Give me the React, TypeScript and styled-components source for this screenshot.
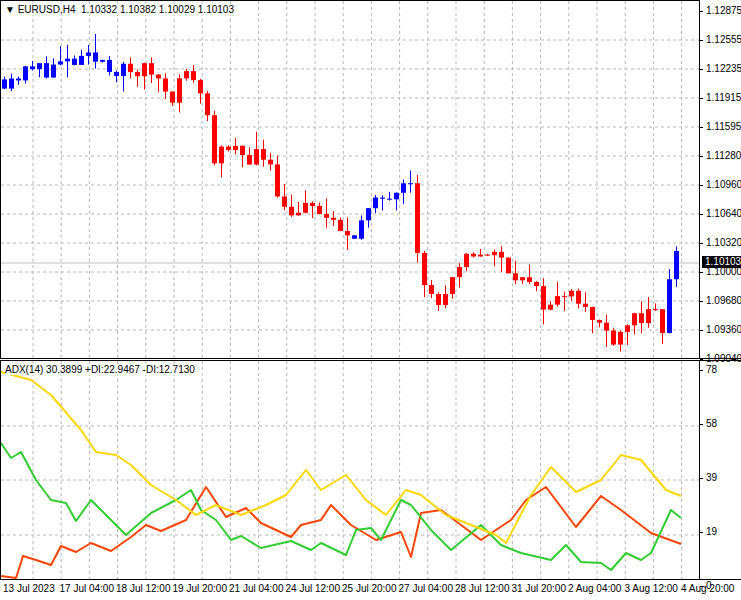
import styled, { createGlobalStyle } from "styled-components";

const Global = createGlobalStyle`
  body { margin: 0; background: #fff; font-family: "Liberation Sans", Arial, sans-serif; overflow: hidden; }
`;

const W = 700;
const MAIN_H = 358;
const IND_H = 218;

const Frame = styled.div`
  width: 741px;
  height: 600px;
  overflow: hidden;
  display: grid;
  grid-template-columns: ${W}px 41px;
  grid-template-rows: ${MAIN_H}px 3px ${IND_H}px 21px;
  font-size: 10px;
  color: #000;
`;

const Pane = styled.div<{ $top?: boolean }>`
  position: relative;
  border-left: 1px solid #000;
  border-top: ${(p) => (p.$top ? "1px solid #000" : "none")};
  border-right: 1px solid #000;
  overflow: hidden;
`;

const Separator = styled.div`
  grid-column: 1 / 3;
  border-top: 1px solid #000;
  border-bottom: 1px solid #000;
  background: #fff;
`;

const Legend = styled.div`
  position: absolute;
  left: 4px;
  top: 3px;
  font-size: 10px;
  background: #fff;
  white-space: pre;
`;

const Axis = styled.div<{ $first: number; $step: number }>`
  display: flex;
  flex-direction: column;
  position: relative;
  z-index: 1;
  span {
    flex: none;
    height: ${(p) => p.$step}px;
    line-height: 12px;
    padding-left: 6px;
    position: relative;
    &::before {
      content: "";
      position: absolute;
      left: 0;
      top: 6px;
      width: 3px;
      border-top: 1px solid #000;
    }
  }
  span:first-child {
    margin-top: ${(p) => p.$first - 6}px;
  }
  span:last-child {
    height: 12px;
  }
`;

const PriceTag = styled.div`
  position: absolute;
  left: 2px;
  top: 256px;
  background: #000;
  color: #fff;
  padding: 0 3px;
  line-height: 12px;
`;

const TimeAxis = styled.div`
  grid-column: 1 / 3;
  display: flex;
  overflow: hidden;
  padding-left: 3px;
  border-top: 1px solid #000;
  span {
    width: 56.5px;
    flex: none;
    line-height: 18px;
    white-space: nowrap;
    font-size: 10px;
  }
`;

// seeded random
let seed = 11;
const rnd = () => {
  seed = (seed * 16807) % 2147483647;
  return seed / 2147483647;
};

const keys: [number, number][] = [
  [0, 1.1212], [40, 1.1224], [100, 1.1234], [125, 1.1218], [150, 1.1222], [170, 1.1196],
  [190, 1.1222], [205, 1.1180], [212, 1.1128], [240, 1.1130], [270, 1.1125], [280, 1.1070],
  [320, 1.1066], [338, 1.1040], [355, 1.1048], [380, 1.1080], [400, 1.1100], [407, 1.1128],
  [413, 1.1062], [420, 1.0985], [440, 1.0962], [455, 1.0992], [470, 1.1022], [490, 1.1020],
  [510, 1.1004], [530, 1.0980], [550, 1.0960], [570, 1.0988], [590, 1.0946], [612, 1.0930],
  [632, 1.0950], [655, 1.0948], [662, 1.0936], [668, 1.0986], [673, 1.1032], [680, 1.1010],
];
const interp = (x: number) => {
  for (let i = 1; i < keys.length; i++) {
    if (x <= keys[i][0]) {
      const [x0, y0] = keys[i - 1];
      const [x1, y1] = keys[i];
      return y0 + ((x - x0) / (x1 - x0)) * (y1 - y0);
    }
  }
  return keys[keys.length - 1][1];
};
const py = (p: number) => 10 + ((1.12875 - p) / 0.0032) * 29;
const colorAt = (x: number) =>
  x < 125 ? "#0000ff" : x < 350 ? "#ff0000" : x < 412 ? "#0000ff" : x < 664 ? "#ff0000" : "#0000ff";

const candles: { x: number; o: number; c: number; h: number; l: number; col: string }[] = [];
let prev = interp(0);
for (let x = 3; x <= 680; x += 7) {
  const c = interp(x) + (rnd() - 0.5) * 0.0022;
  const o = prev;
  const h = Math.max(o, c) + rnd() * rnd() * 0.0022;
  const l = Math.min(o, c) - rnd() * rnd() * 0.0022;
  candles.push({ x, o, c, h, l, col: colorAt(x) });
  prev = c;
}

const yellow: [number, number][] = [[0,372],[30,380],[50,395],[80,430],[95,452],[115,455],[130,465],[150,485],[175,500],[195,515],[215,505],[240,515],[265,505],[285,495],[305,470],[320,490],[345,475],[365,500],[385,515],[405,490],[420,495],[445,515],[470,525],[495,535],[505,543],[530,495],[550,467],[575,492],[600,480],[620,455],[640,460],[665,490],[680,496]];
const green: [number, number][] = [[0,443],[10,458],[20,452],[35,480],[50,500],[65,503],[75,521],[90,500],[110,520],[125,535],[150,513],[175,500],[190,490],[200,510],[215,520],[230,540],[240,536],[260,548],[290,541],[310,550],[320,543],[345,555],[355,530],[370,528],[380,540],[400,500],[410,505],[430,530],[450,550],[480,525],[500,545],[520,553],[550,560],[565,545],[580,562],[600,563],[610,570],[625,553],[640,560],[650,553],[670,510],[680,518]];
const red: [number, number][] = [[0,576],[15,578],[22,556],[35,560],[50,565],[60,546],[75,552],[90,543],[110,551],[130,537],[145,525],[160,531],[185,520],[205,487],[225,517],[245,508],[260,523],[290,537],[300,525],[320,520],[330,505],[350,525],[375,540],[400,532],[410,557],[420,513],[440,510],[460,525],[480,540],[510,520],[525,500],[545,487],[575,527],[600,496],[620,510],[650,533],[680,544]];

const IND_TOP = 361;
const pts = (a: [number, number][]) => a.map(([x, y]) => `${x},${y - IND_TOP}`).join(" ");

const vGrid = Array.from({ length: 25 }, (_, i) => 32 + i * 28.2);

function Grid({ rows }: { rows: number[] }) {
  return (
    <g stroke="#b8b8b8" strokeDasharray="3 3" strokeWidth={1}>
      {vGrid.map((x) => (
        <line key={x} x1={x} y1={0} x2={x} y2={400} />
      ))}
      {rows.map((y) => (
        <line key={y} x1={0} y1={y} x2={W} y2={y} />
      ))}
    </g>
  );
}

const prices = ["1.12875","1.12555","1.12235","1.11915","1.11595","1.11280","1.10960","1.10640","1.10320","1.10000","1.09680","1.09360","1.09040"];
const times = ["13 Jul 2023","17 Jul 04:00","18 Jul 12:00","19 Jul 20:00","21 Jul 04:00","24 Jul 12:00","25 Jul 20:00","27 Jul 04:00","28 Jul 12:00","31 Jul 20:00","2 Aug 04:00","3 Aug 12:00","4 Aug 20:00"];

export default function App() {
  return (
    <>
      <Global />
      <Frame>
        <Pane $top>
          <svg width={W} height={MAIN_H}>
            <Grid rows={prices.map((_, i) => 10 + i * 29).slice(1)} />
            <line x1={0} y1={262} x2={W} y2={262} stroke="#c0c0c0" />
            {candles.map((k) => {
              const top = py(Math.max(k.o, k.c));
              const bot = py(Math.min(k.o, k.c));
              return (
                <g key={k.x} fill={k.col} stroke={k.col}>
                  <line x1={k.x + 0.5} y1={py(k.h)} x2={k.x + 0.5} y2={py(k.l)} />
                  <rect x={k.x - 2} y={top} width={5} height={Math.max(1, bot - top)} strokeWidth={0} />
                </g>
              );
            })}
          </svg>
          <Legend>▼ EURUSD,H4  1.10332 1.10382 1.10029 1.10103</Legend>
        </Pane>
        <Axis $first={11} $step={29}>
          {prices.map((p) => (
            <span key={p}>{p}</span>
          ))}
          <PriceTag>1.10103</PriceTag>
        </Axis>
        <Separator />
        <Pane>
          <svg width={W} height={IND_H}>
            <Grid rows={[426, 480, 535].map((y) => y - IND_TOP)} />
            <g fill="none" strokeWidth={2} strokeLinejoin="round">
              <polyline points={pts(red)} stroke="#ff4500" />
              <polyline points={pts(green)} stroke="#32cd32" />
              <polyline points={pts(yellow)} stroke="#ffd700" />
            </g>
          </svg>
          <Legend>ADX(14) 30.3899 +DI:22.9467 -DI:12.7130</Legend>
        </Pane>
        <Axis $first={9} $step={54}>
          {["78", "58", "39", "19", "0"].map((v) => (
            <span key={v}>{v}</span>
          ))}
        </Axis>
        <TimeAxis>
          {times.map((t) => (
            <span key={t}>{t}</span>
          ))}
        </TimeAxis>
      </Frame>
    </>
  );
}
